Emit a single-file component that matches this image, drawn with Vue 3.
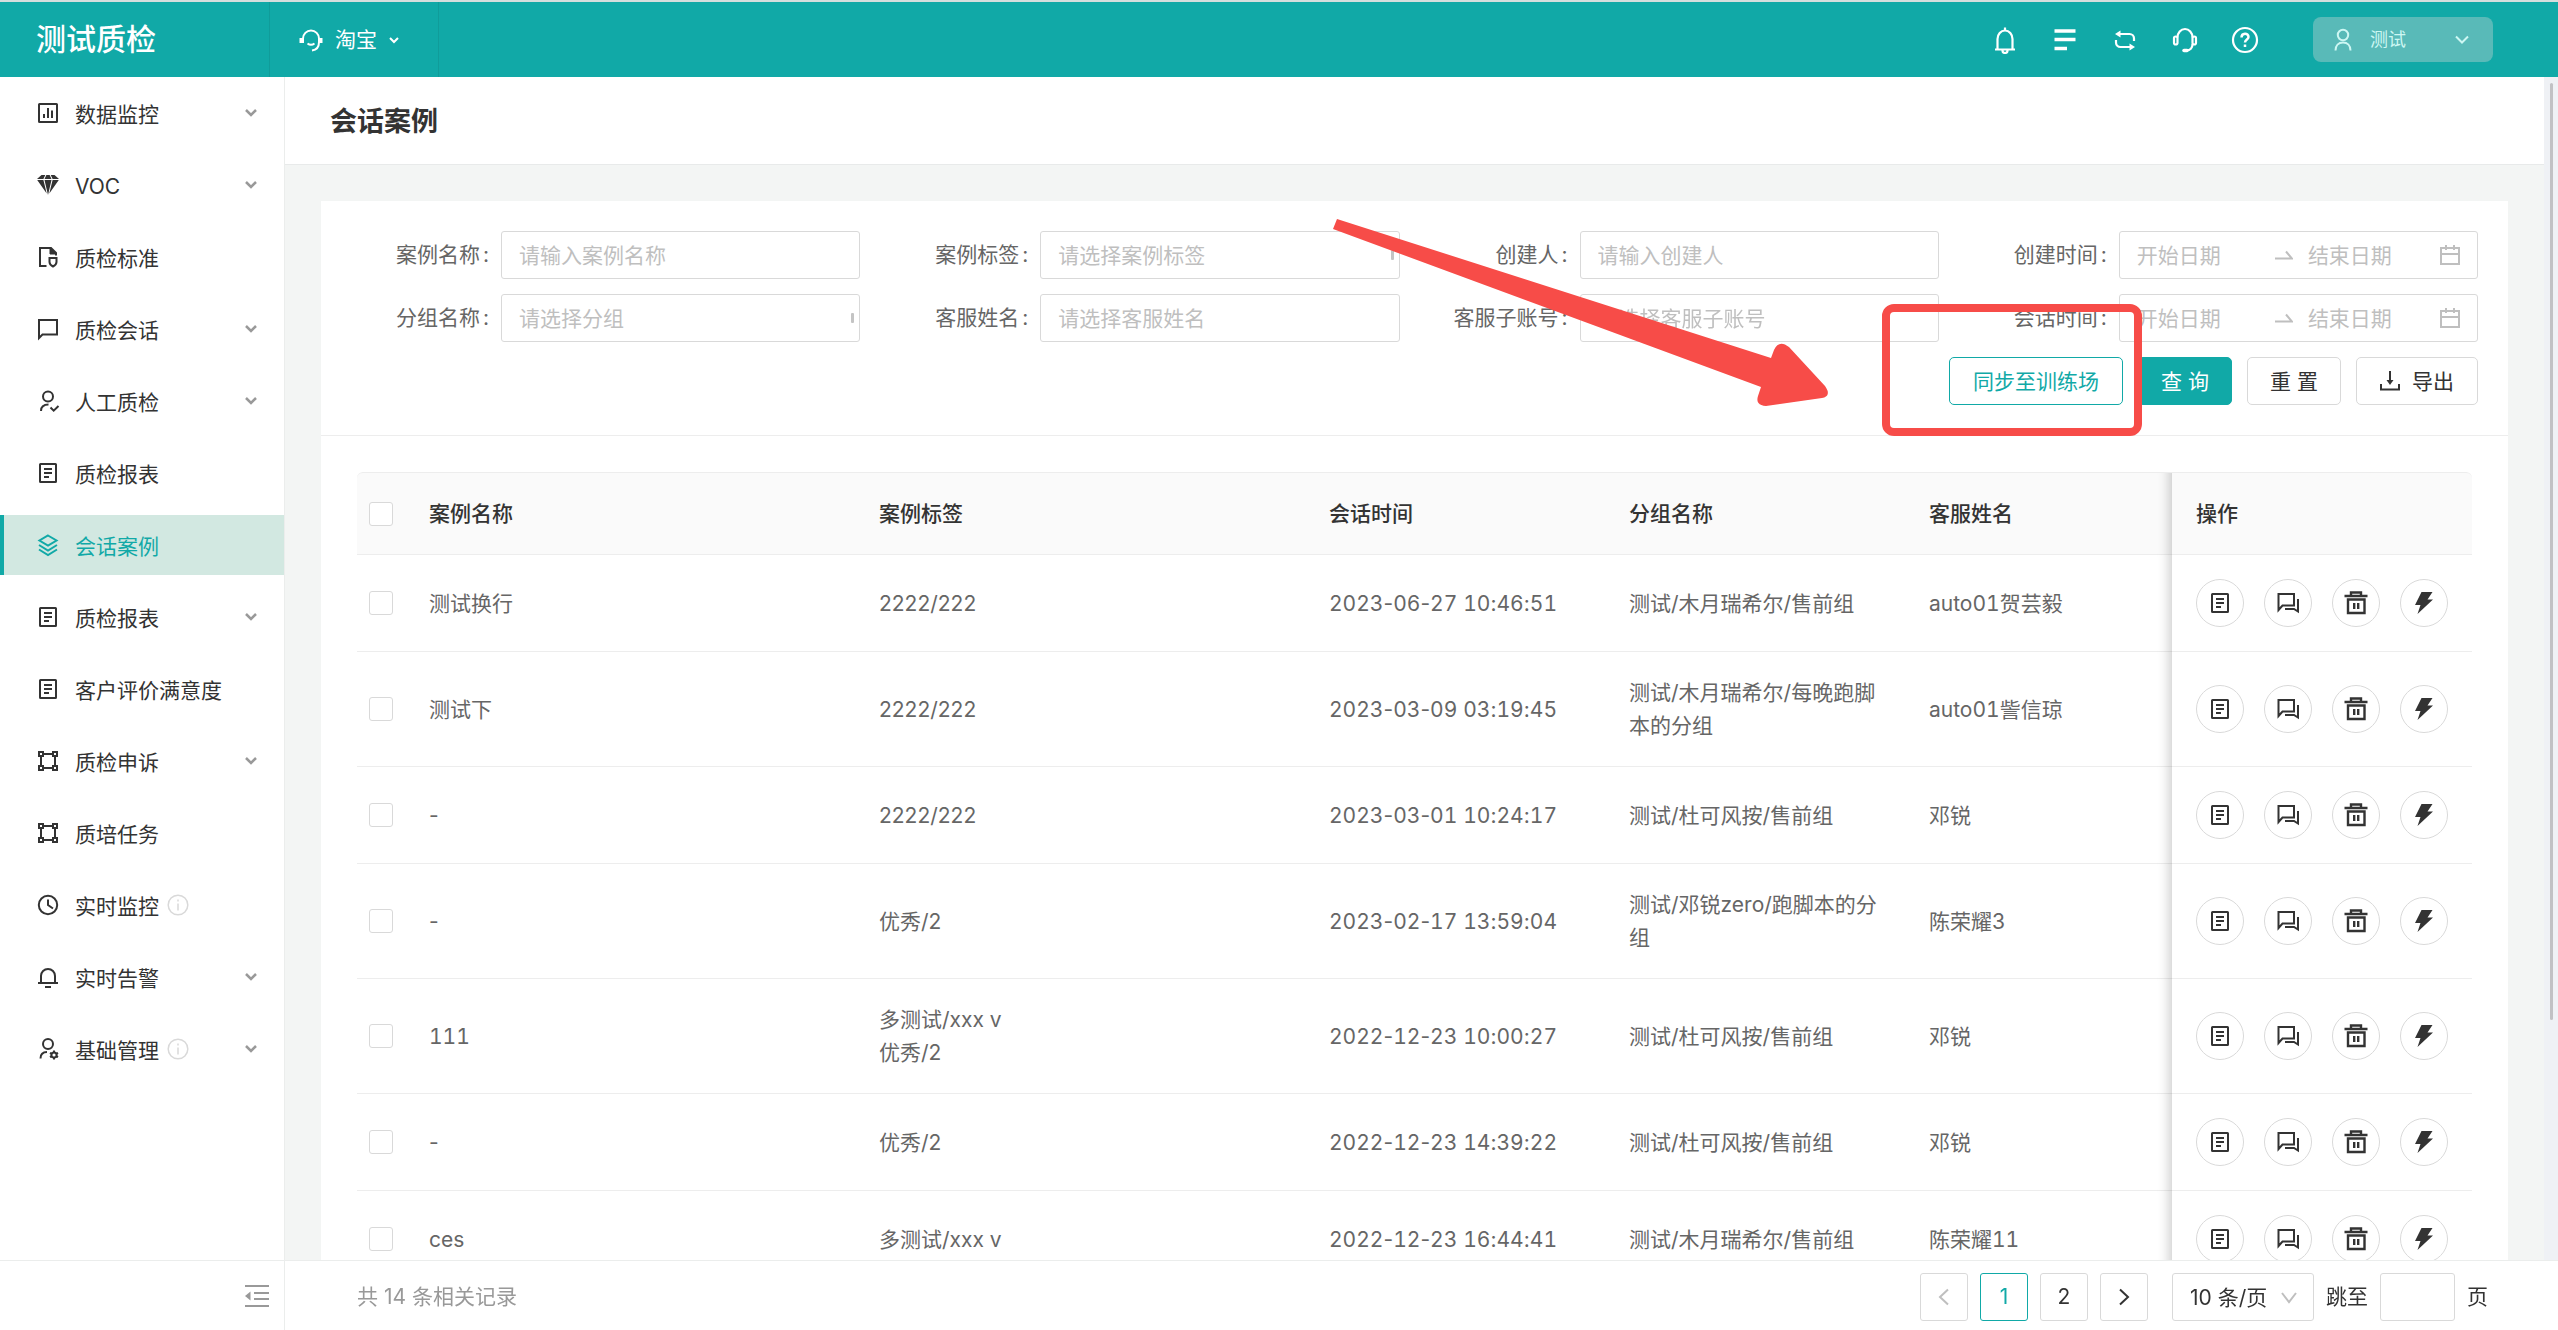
<script setup>
import { ref } from 'vue'

const icons = {
  chart: '<rect x="3" y="3" width="18" height="18" rx="0.5"/><path d="M8 17v-4M12 17V7M16 17V9.500"/>',
  diamond: '<g fill="currentColor" stroke="none"><path d="M5.500 2h3.800L7.400 6H1zM10.400 2h3.200l1.900 4h-7zM14.700 2h3.800L23 6h-6.400zM1.200 7h6.200l3.300 13.500zM8.500 7h7L12 22zM16.600 7h6.200l-9.500 13.500z"/></g>',
  standard: '<path d="M10.500 21H4V3h11l5 5v2.500"/><path d="M14 3v6h6z" fill="currentColor" stroke-width="1"/><path d="M13.500 13h7v4c0 2-1.500 3.500-3.500 4.500c-2-1-3.500-2.500-3.500-4.500z"/>',
  chat: '<path d="M3 21V3h18v14.500H6.500z"/>',
  check: '<circle cx="12" cy="7.500" r="5"/><path d="M5 22c0-4.500 3-6.500 7.500-6.500M14.500 18.500l3.200 3.200l4.800-4.700"/>',
  report: '<rect x="4" y="3" width="16" height="18" rx="0.500"/><path d="M8 8h8M8 12h8M8 16h5"/>',
  layers: '<path d="M12 2.500l8.500 5L12 12.500l-8.500-5zM3 12l9 5.500l9-5.500M3 16.500L12 22l9-5.500"/>',
  nodes: '<path d="M5 7v10M19 7v10M7 5h10M7 19h10"/><rect x="3" y="3" width="4" height="4"/><rect x="17" y="3" width="4" height="4"/><rect x="3" y="17" width="4" height="4"/><rect x="17" y="17" width="4" height="4"/>',
  clock: '<circle cx="12" cy="12" r="9.200"/><path d="M12 6.500V12l5 3.500"/>',
  alarm: '<path d="M5 18v-7a7 7 0 0 1 14 0v7M2 18h20M9 22h6"/>',
  manage: '<circle cx="12" cy="7" r="5"/><path d="M4.500 21.500c0-4.500 2.500-6.500 6.500-6.500"/><circle cx="18" cy="18" r="2.600"/><path d="M18 13.500v2M18 20.500v2M14 15.800l1.800 1M20.200 19.200l1.800 1M14 20.200l1.800-1M20.200 16.800l1.800-1"/>',
  chats: '<path d="M2.500 19V3h15.500v11.500H6.500zM22 8v12.500l-4-2.500H9"/>',
  trash: '<path d="M.5 5h23M7 4V1.500h10V4M8 1.500h8M4 8.500h16.500V22H4zM10.200 12v6M14.200 12v6" stroke-width="2.400"/>',
  bolt: '<path d="M9.500 1h11l-5 7.500H21L5.500 23l3-9H3z" fill="currentColor" stroke="none"/>',
}

const menu = [
  { icon: 'chart', text: '数据监控', more: true },
  { icon: 'diamond', text: 'VOC', more: true },
  { icon: 'standard', text: '质检标准' },
  { icon: 'chat', text: '质检会话', more: true },
  { icon: 'check', text: '人工质检', more: true },
  { icon: 'report', text: '质检报表' },
  { icon: 'layers', text: '会话案例', active: true },
  { icon: 'report', text: '质检报表', more: true },
  { icon: 'report', text: '客户评价满意度' },
  { icon: 'nodes', text: '质检申诉', more: true },
  { icon: 'nodes', text: '质培任务' },
  { icon: 'clock', text: '实时监控', info: true },
  { icon: 'alarm', text: '实时告警', more: true },
  { icon: 'manage', text: '基础管理', info: true, more: true },
]

const fields = [
  { id: 'name', label: '案例名称', type: 'text', hint: '请输入案例名称' },
  { id: 'tag', label: '案例标签', type: 'select', hint: '请选择案例标签', mark: true },
  { id: 'creator', label: '创建人', type: 'text', hint: '请输入创建人' },
  { id: 'created', label: '创建时间', type: 'range' },
  { id: 'group', label: '分组名称', type: 'select', hint: '请选择分组', mark: true },
  { id: 'agent', label: '客服姓名', type: 'select', hint: '请选择客服姓名' },
  { id: 'account', label: '客服子账号', type: 'select', hint: '请选择客服子账号' },
  { id: 'session', label: '会话时间', type: 'range' },
]

const rows = [
  { name: '测试换行', tags: ['2222/222'], time: '2023-06-27 10:46:51', group: '测试/木月瑞希尔/售前组', agent: 'auto01贺芸毅' },
  { name: '测试下', tags: ['2222/222'], time: '2023-03-09 03:19:45', group: '测试/木月瑞希尔/每晚跑脚本的分组', agent: 'auto01訾信琼' },
  { name: '-', tags: ['2222/222'], time: '2023-03-01 10:24:17', group: '测试/杜可风按/售前组', agent: '邓锐' },
  { name: '-', tags: ['优秀/2'], time: '2023-02-17 13:59:04', group: '测试/邓锐zero/跑脚本的分组', agent: '陈荣耀3' },
  { name: '111', tags: ['多测试/xxx v', '优秀/2'], time: '2022-12-23 10:00:27', group: '测试/杜可风按/售前组', agent: '邓锐' },
  { name: '-', tags: ['优秀/2'], time: '2022-12-23 14:39:22', group: '测试/杜可风按/售前组', agent: '邓锐' },
  { name: 'ces', tags: ['多测试/xxx v'], time: '2022-12-23 16:44:41', group: '测试/木月瑞希尔/售前组', agent: '陈荣耀11' },
]

const actions = [
  { icon: 'report', label: '详情' },
  { icon: 'chats', label: '会话' },
  { icon: 'trash', label: '删除' },
  { icon: 'bolt', label: '训练' },
]

// Digits line up between rows; the separators keep their own widths.
const timeParts = (time) => time.split(/([-: ])/)

const page = ref(1)
</script>

<template>
  <div class="app">
    <header class="top">
      <div class="logo">测试质检</div>
      <button class="shop" type="button">
        <svg class="ico" viewBox="0 0 24 24"><path d="M4 15V10.500a8 8 0 0 1 16 0V14c0 5-3 8-7 8.500M8.500 15.500c2 1.500 5 1.500 7 0"/><path d="M2 10v5M22 10v5" stroke-width="3"/></svg>
        <span>淘宝</span>
        <svg class="caret" viewBox="0 0 10 8"><path d="M1 2l4 4l4-4"/></svg>
      </button>
      <nav class="tools">
        <button type="button" aria-label="通知"><svg class="tool" viewBox="0 0 28 28"><path d="M6.500 23V13a7.500 8.500 0 0 1 15 0v10M4 23.500h20M14 1.500v3M11.500 24.500a2.500 2.500 0 0 0 5 0"/></svg></button>
        <button type="button" aria-label="列表"><svg class="tool" viewBox="0 0 28 28"><path d="M3.500 5h21M3.500 13.500h21M3.500 22.500h12.500" stroke-width="3.500"/></svg></button>
        <button type="button" aria-label="切换"><svg class="tool" viewBox="0 0 28 28"><path d="M5 14v2.500a4.500 4.500 0 0 0 4.500 4.500H19M23 15v-2.500A4.500 4.500 0 0 0 18.500 8H9"/><path d="M9.500 4.500v7L4 8zM18.500 17.500v7L24 21z" fill="currentColor" stroke="none"/></svg></button>
        <button type="button" aria-label="客服"><svg class="tool" viewBox="0 0 28 28"><path d="M6.500 11.500a7.500 8.500 0 0 1 15 0M21.500 18c0 4-2.500 6.500-6 6.500"/><rect x="3" y="10.500" width="3.500" height="8" rx="1.700"/><rect x="21.500" y="10.500" width="3.500" height="8" rx="1.700"/><path d="M13 24.500h3" stroke-width="3.500" stroke-linecap="round"/></svg></button>
        <button type="button" aria-label="帮助"><svg class="tool" viewBox="0 0 28 28"><circle cx="14" cy="14" r="12"/><path d="M10.500 11.500c0-5 7-5 7-.5c0 2.500-3.500 2.500-3.500 5.500M14 18.500v2.500" stroke-width="2.500"/></svg></button>
      </nav>
      <button class="user" type="button">
        <svg class="ico" viewBox="0 0 24 24"><circle cx="12" cy="7" r="5.200"/><path d="M4.500 22.500c0-5 3-8 7.500-8s7.500 3 7.500 8"/></svg>
        <span>测试</span>
        <svg class="user-caret" viewBox="0 0 14 10"><path d="M1 1.500l6 6l6-6"/></svg>
      </button>
    </header>

    <div class="body">
      <aside class="side">
        <nav class="menu">
          <a v-for="(m, i) in menu" :key="i" href="#" class="item" :class="{ active: m.active }">
            <svg class="ico" viewBox="0 0 24 24" v-html="icons[m.icon]"></svg>
            <span>{{ m.text }}</span>
            <svg v-if="m.info" class="info" viewBox="0 0 22 22"><circle cx="11" cy="11" r="9.800"/><path d="M11 9.500v7M11 5.500v2"/></svg>
            <svg v-if="m.more" class="more" viewBox="0 0 12 8"><path d="M1 1l5 5l5-5"/></svg>
          </a>
        </nav>
        <div class="fold">
          <button type="button" aria-label="收起菜单"><svg viewBox="0 0 24 24"><path d="M0 2h24M9 9h15M9 15h15M0 22h24"/><path d="M5.500 7.500v9L0 12z" fill="currentColor" stroke="none"/></svg></button>
        </div>
      </aside>

      <div class="main">
        <div class="view">
          <main class="scroll">
            <h1 class="title">会话案例</h1>
            <section class="card">
              <form class="search" @submit.prevent>
                <div class="fields">
                  <div v-for="f in fields" :key="f.id" class="field">
                    <label :for="f.id">{{ f.label }}<i>:</i></label>
                    <input v-if="f.type === 'text'" :id="f.id" class="box" type="text" :placeholder="f.hint">
                    <div v-else-if="f.type === 'select'" class="pick">
                      <select :id="f.id" class="box"><option>{{ f.hint }}</option></select>
                      <span v-if="f.mark" class="mark"></span>
                    </div>
                    <div v-else class="box range">
                      <input :id="f.id" type="text" placeholder="开始日期">
                      <svg class="to" viewBox="0 0 18 10"><path d="M0 8.500h17l-6-7"/></svg>
                      <input type="text" placeholder="结束日期" :aria-label="f.label + '结束日期'">
                      <svg class="cal" viewBox="0 0 20 20"><path d="M1 3h18v16H1zM1 9h18M6 0v5M14 0v5"/></svg>
                    </div>
                  </div>
                </div>
                <div class="buttons">
                  <div class="spot">
                    <button class="btn outline" type="button">同步至训练场</button>
                    <span class="frame"></span>
                    <svg class="arrow" viewBox="0 0 500 194"><path d="M4 2L438 141L441 133Q446 122 456 130L492 169Q499 179 489 181L433 189Q422 188 425 179L428 170L0 12z"/></svg>
                  </div>
                  <button class="btn short primary" type="submit">查 询</button>
                  <button class="btn short" type="reset">重 置</button>
                  <button class="btn" type="button">
                    <svg class="down" viewBox="0 0 20 20"><path d="M1 13v5.500h18V13M10 0v12"/><path d="M6.500 9h7L10 14z" fill="currentColor" stroke="none"/></svg>
                    导出
                  </button>
                </div>
              </form>

              <table class="grid">
                <colgroup>
                  <col class="c-check"><col><col><col class="c-time"><col class="c-time"><col class="c-agent"><col class="c-time">
                </colgroup>
                <thead>
                  <tr>
                    <th class="tick"><input type="checkbox" aria-label="全选"></th>
                    <th>案例名称</th><th>案例标签</th><th>会话时间</th><th>分组名称</th><th>客服姓名</th><th class="fixed">操作</th>
                  </tr>
                </thead>
                <tbody>
                  <tr v-for="(r, i) in rows" :key="i">
                    <td class="tick"><input type="checkbox" :aria-label="'选择第' + (i + 1) + '行'"></td>
                    <td :class="{ num: r.name !== '-' }">{{ r.name }}</td>
                    <td><div v-for="t in r.tags" :key="t">{{ t }}</div></td>
                    <td><span v-for="(part, k) in timeParts(r.time)" :key="k" :class="{ num: k % 2 === 0 }">{{ part }}</span></td>
                    <td>{{ r.group }}</td>
                    <td class="num">{{ r.agent }}</td>
                    <td class="fixed">
                      <div class="acts">
                        <button v-for="a in actions" :key="a.icon" type="button" :aria-label="a.label">
                          <svg class="ico" viewBox="0 0 24 24" v-html="icons[a.icon]"></svg>
                        </button>
                      </div>
                    </td>
                  </tr>
                </tbody>
              </table>
            </section>
          </main>
          <div class="rail"><div class="thumb"></div></div>
        </div>

        <footer class="foot">
          <span class="total">共 14 条相关记录</span>
          <nav class="pages">
            <button type="button" disabled aria-label="上一页"><svg viewBox="0 0 12 18"><path d="M10 1.500L2 9l8 7.500"/></svg></button>
            <button v-for="n in 2" :key="n" type="button" :class="{ on: n === page }" @click="page = n">{{ n }}</button>
            <button type="button" aria-label="下一页"><svg viewBox="0 0 12 18"><path d="M2 1.500L10 9l-8 7.500"/></svg></button>
          </nav>
          <div class="size">
            <select aria-label="每页条数"><option>10 条/页</option></select>
            <svg viewBox="0 0 16 12"><path d="M1 1l7 9l7-9"/></svg>
          </div>
          <label class="jump">跳至<input type="text">页</label>
        </footer>
      </div>
    </div>
  </div>
</template>

<style>
html,
body {
  margin: 0;
  background: #fff;
}
</style>

<style scoped>
.app,
.app * {
  box-sizing: border-box;
}
.app {
  display: flex;
  flex-direction: column;
  height: 100vh;
  overflow: hidden;
  font: 21px/33px Inter, "Noto Sans CJK SC", sans-serif;
  color: #333;
}
button,
input,
select {
  font: inherit;
  color: inherit;
  margin: 0;
  outline: none;
}
button {
  display: flex;
  align-items: center;
  justify-content: center;
  padding: 0;
  border: 0;
  background: none;
}
svg {
  display: block;
  flex: none;
  fill: none;
  stroke: currentColor;
  stroke-width: 2;
}
.ico {
  width: 24px;
  height: 24px;
}

/* header */
.top {
  display: flex;
  flex: none;
  align-items: center;
  height: 77px;
  padding-right: 65px;
  border-top: 2px solid #d5dedd;
  background: #11a9a7;
  color: #fff;
}
.logo {
  width: 269px;
  padding-left: 36px;
  font-size: 30px;
  font-weight: 500;
}
.shop {
  align-self: stretch;
  justify-content: flex-start;
  width: 170px;
  padding-left: 29px;
  gap: 12px;
  border: solid #109c9a;
  border-width: 0 1px;
}
.caret {
  width: 10px;
  height: 8px;
}
.tools {
  display: flex;
  gap: 32px;
  margin-left: auto;
  margin-right: 54px;
}
.tool {
  width: 28px;
  height: 28px;
  stroke-width: 2.2;
}
.user {
  width: 180px;
  height: 45px;
  padding: 0 24px 0 18px;
  border-radius: 8px;
  background: #59bab8;
  color: #cdf7f3;
  font-size: 18px;
}
.user span {
  margin: 0 auto 0 15px;
}
.user-caret {
  width: 14px;
  height: 10px;
}

/* sidebar */
.body {
  display: flex;
  flex: 1;
  min-height: 0;
}
.side {
  display: flex;
  flex: none;
  flex-direction: column;
  width: 285px;
  border-right: 1px solid #ebedec;
}
.menu {
  display: flex;
  flex: 1;
  flex-direction: column;
  gap: 12px;
  min-height: 0;
  padding-top: 6px;
  overflow: hidden;
}
.item {
  display: flex;
  flex: none;
  align-items: center;
  height: 60px;
  padding: 0 27px 0 32px;
  border-left: 4px solid transparent;
  color: #333;
  text-decoration: none;
}
.item.active {
  border-left-color: #11a9a7;
  background: #d2e8e1;
  color: #11a9a7;
}
.item span {
  margin-left: 15px;
  padding-top: 2px;
}
.info {
  width: 22px;
  height: 22px;
  margin-left: 8px;
  color: #d9d9d9;
  stroke-width: 1.5;
}
.more {
  width: 12px;
  height: 8px;
  margin-left: auto;
  color: #999;
  stroke-width: 2.5;
}
.fold {
  display: flex;
  flex: none;
  align-items: center;
  justify-content: flex-end;
  height: 70px;
  padding-right: 15px;
  border-top: 1px solid #ebedec;
  color: #999;
}
.fold svg {
  width: 24px;
  height: 24px;
}

/* main */
.main {
  display: flex;
  flex: 1;
  flex-direction: column;
  min-width: 0;
}
.view {
  display: flex;
  flex: 1;
  min-height: 0;
}
.scroll {
  flex: 1;
  min-width: 0;
  overflow: hidden auto;
  scrollbar-width: none;
  background: #f3f5f4;
}
.rail {
  flex: none;
  width: 14px;
  padding: 6px 5px 6px 6px;
  background: #eff1f5;
}
.thumb {
  height: 80%;
  border-radius: 2px;
  background: #c1c1c4;
}
.title {
  margin: 0;
  padding: 28px 45px 26px;
  border-bottom: 1px solid #e8eaea;
  background: #fff;
  font-size: 27px;
  font-weight: 600;
}
.card {
  margin: 36px;
  background: #fff;
}

/* search form */
.search {
  padding: 30px 30px 30px 0;
  border-bottom: 1px solid #ededed;
}
.fields {
  display: grid;
  grid-template-columns: repeat(4, minmax(0, 1fr));
  gap: 15px 0;
}
.field {
  display: flex;
}
.field label {
  flex: none;
  width: 180px;
  line-height: 48px;
  text-align: right;
  color: #666;
}
.field i {
  margin: 0 12px 0 3px;
  font-style: normal;
}
.box {
  display: block;
  flex: 1;
  width: 100%;
  min-width: 0;
  height: 48px;
  padding: 0 17px;
  border: 1px solid #d9d9d9;
  border-radius: 3px;
  background: #fff;
  appearance: none;
}
input::placeholder {
  color: #bfbfbf;
  opacity: 1;
}
.pick {
  position: relative;
  flex: 1;
  min-width: 0;
}
.pick select {
  color: #bfbfbf;
}
.mark {
  position: absolute;
  top: 19px;
  right: 6px;
  width: 3px;
  height: 10px;
  border-radius: 1px;
  background: #c4c4c4;
}
.range {
  display: flex;
  align-items: center;
  color: #bfbfbf;
}
.range input {
  flex: 1;
  min-width: 0;
  padding: 0;
  border: 0;
  background: none;
}
.to {
  width: 18px;
  height: 10px;
  margin: 0 15px 0 6px;
}
.cal {
  width: 20px;
  height: 20px;
}
.buttons {
  display: flex;
  justify-content: flex-end;
  gap: 15px;
  margin-top: 15px;
}
.btn {
  gap: 12px;
  height: 48px;
  padding: 0 23px;
  border: 1px solid #d9d9d9;
  border-radius: 5px;
  background: #fff;
}
.short {
  width: 94px;
  padding: 0;
}
.outline {
  border-color: #11a9a7;
  color: #11a9a7;
}
.primary {
  border-color: #11a9a7;
  background: #11a9a7;
  color: #fff;
}
.down {
  width: 20px;
  height: 20px;
}
.spot {
  position: relative;
}
.frame {
  position: absolute;
  z-index: 3;
  inset: -53px -19px -31px -67px;
  border: 8px solid #f74c48;
  border-radius: 12px;
}
.arrow {
  position: absolute;
  z-index: 3;
  right: 290px;
  bottom: -6px;
  width: 500px;
  height: 194px;
  fill: #f74c48;
  stroke: none;
}

/* table */
.grid {
  width: calc(100% - 72px);
  margin: 36px 37px 36px 36px;
  border-collapse: separate;
  border-spacing: 0;
  table-layout: fixed;
}
.c-check {
  width: 48px;
}
.c-time {
  width: 300px;
}
.c-agent {
  width: 267px;
}
th,
td {
  padding: 24px;
  border-bottom: 1px solid #ededed;
  text-align: left;
  overflow-wrap: break-word;
}
th {
  border-top: 1px solid #ededed;
  background: #fafafa;
  font-weight: 500;
}
th:first-child {
  border-top-left-radius: 6px;
}
th:last-child {
  border-top-right-radius: 6px;
}
td {
  height: 97px;
  color: #666;
}
.num {
  font-variant-numeric: tabular-nums;
}
.tick {
  padding: 0 12px;
}
.tick input {
  display: block;
  width: 24px;
  height: 24px;
  border: 1px solid #d9d9d9;
  border-radius: 3px;
  background: #fff;
  appearance: none;
}
.fixed {
  position: relative;
}
.fixed::before {
  position: absolute;
  top: 0;
  bottom: -1px;
  left: -45px;
  width: 45px;
  box-shadow: inset -15px 0 12px -12px rgba(0, 0, 0, 0.2);
  content: "";
}
td.fixed {
  padding-top: 0;
  padding-bottom: 0;
  color: #333;
}
.acts {
  display: flex;
  gap: 20px;
}
.acts button {
  width: 48px;
  height: 48px;
  border: 1px solid #d9d9d9;
  border-radius: 50%;
}

/* footer */
.foot {
  display: flex;
  flex: none;
  align-items: flex-start;
  height: 70px;
  padding: 12px 70px 0 72px;
  border-top: 1px solid #ebedec;
  line-height: 48px;
}
.total {
  margin-right: auto;
  color: #999;
}
.pages {
  display: flex;
  gap: 12px;
}
.pages button {
  width: 48px;
  height: 48px;
  border: 1px solid #d9d9d9;
  border-radius: 3px;
}
.pages button:disabled {
  color: #bfbfbf;
}
.pages .on {
  border-color: #11a9a7;
  color: #11a9a7;
}
.pages svg {
  width: 12px;
  height: 18px;
}
.size {
  position: relative;
  width: 142px;
  margin: 0 12px 0 24px;
}
.size select {
  display: block;
  width: 100%;
  height: 48px;
  padding: 0 17px;
  border: 1px solid #d9d9d9;
  border-radius: 3px;
  background: #fff;
  appearance: none;
}
.size svg {
  position: absolute;
  top: 19px;
  right: 17px;
  width: 16px;
  height: 12px;
  color: #bfbfbf;
}
.jump {
  display: flex;
}
.jump input {
  width: 75px;
  height: 48px;
  margin: 0 12px;
  padding: 0 12px;
  border: 1px solid #d9d9d9;
  border-radius: 3px;
}
</style>
